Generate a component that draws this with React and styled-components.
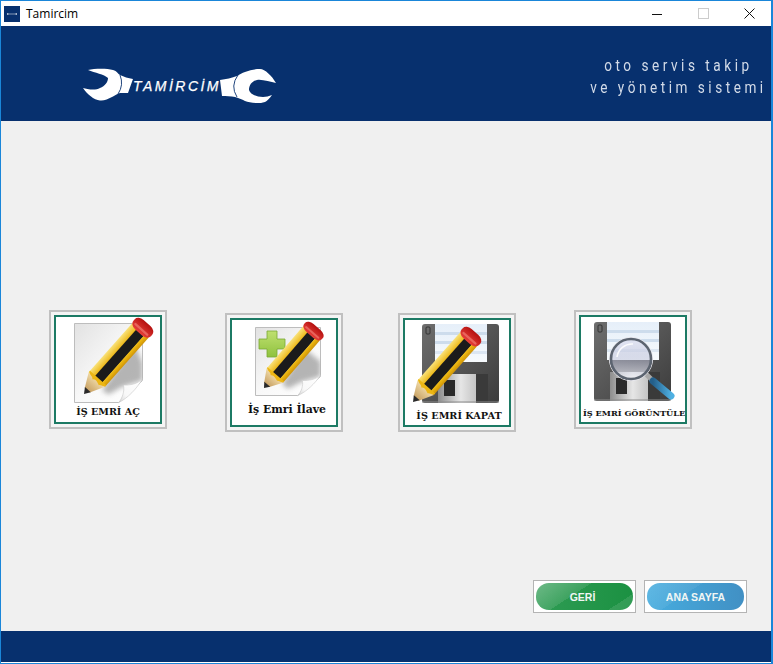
import React from "react";
import styled, { createGlobalStyle } from "styled-components";

const GlobalStyle = createGlobalStyle`
  html, body {
    margin: 0;
    padding: 0;
    background: #f0f0f0;
  }
`;

// shared gradients for all the tile icons
const IconDefs = () => (
  <HiddenSvg width="0" height="0">
    <defs>
      <linearGradient id="sheet" x1="0" y1="0" x2="1" y2="1">
        <stop offset="0" stopColor="#e2e2e2" />
        <stop offset="0.5" stopColor="#f8f8f8" />
        <stop offset="1" stopColor="#ffffff" />
      </linearGradient>
      <linearGradient id="curl" x1="1" y1="0" x2="0" y2="1">
        <stop offset="0" stopColor="#ffffff" />
        <stop offset="0.7" stopColor="#f8f8f8" />
        <stop offset="1" stopColor="#d4d4d4" />
      </linearGradient>
      <linearGradient id="wood" x1="0" y1="0" x2="1" y2="0">
        <stop offset="0" stopColor="#c7a063" />
        <stop offset="1" stopColor="#efd9a6" />
      </linearGradient>
      <linearGradient id="yellowTop" x1="0" y1="0" x2="0" y2="1">
        <stop offset="0" stopColor="#f9e27a" />
        <stop offset="1" stopColor="#ecb614" />
      </linearGradient>
      <linearGradient id="yellowLow" x1="0" y1="0" x2="0" y2="1">
        <stop offset="0" stopColor="#f3bf12" />
        <stop offset="1" stopColor="#cf9408" />
      </linearGradient>
      <linearGradient id="eraser" x1="0" y1="0" x2="1" y2="0">
        <stop offset="0" stopColor="#e8403a" />
        <stop offset="1" stopColor="#b4100f" />
      </linearGradient>
      <linearGradient id="plus" x1="0" y1="0" x2="0" y2="1">
        <stop offset="0" stopColor="#bfe070" />
        <stop offset="1" stopColor="#8fc23e" />
      </linearGradient>
      <linearGradient id="disk" x1="0" y1="0" x2="1" y2="1">
        <stop offset="0" stopColor="#6e6e6e" />
        <stop offset="1" stopColor="#3c3c3c" />
      </linearGradient>
      <linearGradient id="paper" x1="0" y1="0" x2="0" y2="1">
        <stop offset="0" stopColor="#e6eff9" />
        <stop offset="1" stopColor="#f6fafd" />
      </linearGradient>
      <linearGradient id="shutter" x1="0" y1="0" x2="1" y2="0">
        <stop offset="0" stopColor="#8d8d8d" />
        <stop offset="0.6" stopColor="#e6e6e6" />
        <stop offset="1" stopColor="#c4c4c4" />
      </linearGradient>
      <linearGradient id="lens" x1="0" y1="0" x2="0" y2="1">
        <stop offset="0" stopColor="#e4e6f4" stopOpacity="0.9" />
        <stop offset="0.5" stopColor="#b9bdd6" stopOpacity="0.5" />
        <stop offset="1" stopColor="#f2f3f8" stopOpacity="0.78" />
      </linearGradient>
      <linearGradient id="handle" x1="0" y1="0" x2="1" y2="0">
        <stop offset="0" stopColor="#245f8a" />
        <stop offset="1" stopColor="#4fb0e2" />
      </linearGradient>
      <filter id="soft" x="-30%" y="-30%" width="160%" height="160%">
        <feGaussianBlur stdDeviation="2.6" />
      </filter>
    </defs>
  </HiddenSvg>
);

const Sheet = ({ x, y, w, h, tip, end }) => {
  const outline = `M0 0H${w}V${h * 0.72}L${w * 0.65} ${h}H0Z`;
  const clipId = `page-${x}`;
  return (
    <g transform={`translate(${x} ${y})`}>
      <clipPath id={clipId}>
        <path d={outline} />
      </clipPath>
      <path d={outline} fill="url(#sheet)" stroke="#bdbdbd" strokeWidth="1" />
      {/* pencil's shadow falls on the page only */}
      <g clipPath={`url(#${clipId})`}>
        <path
          d={`M${tip[0] - x + 18} ${tip[1] - y - 4}L${end[0] - x - 12} ${end[1] - y + 22}L${w} ${h * 0.5}L${w} ${h * 0.72}L${w * 0.7} ${h * 0.8}L${w * 0.5} ${h * 0.9}Z`}
          fill="#6e6e6e"
          opacity="0.5"
          filter="url(#soft)"
        />
      </g>
      {/* folded corner */}
      <path
        d={`M${w} ${h * 0.7}C${w * 0.92} ${h * 0.77} ${w * 0.82} ${h * 0.78} ${w * 0.72} ${h * 0.78}C${w * 0.74} ${h * 0.86} ${w * 0.7} ${h * 0.95} ${w * 0.65} ${h}C${w * 0.78} ${h * 0.95} ${w * 0.92} ${h * 0.82} ${w} ${h * 0.7}Z`}
        fill="url(#curl)"
        stroke="#c8c8c8"
        strokeWidth="0.6"
      />
    </g>
  );
};

const Pencil = ({ tip, end }) => {
  const dx = end[0] - tip[0];
  const dy = end[1] - tip[1];
  const len = Math.hypot(dx, dy);
  const angle = (Math.atan2(dy, dx) * 180) / Math.PI;
  return (
    <g transform={`translate(${tip[0]} ${tip[1]}) rotate(${angle}) scale(${len / 98} 1.3)`}>
      <path d="M5 -2.6L20 -8.4V8.4L5 2.6Z" fill="url(#wood)" />
      <path d="M0 0L6 -3V3Z" fill="#2a2a2a" />
      <rect x="20" y="-8.4" width="68" height="6" fill="url(#yellowTop)" />
      <rect x="20" y="-2.8" width="68" height="7.6" fill="#1b1b1b" />
      <rect x="20" y="4.6" width="68" height="3.8" fill="url(#yellowLow)" />
      <path d="M21 -8.4C18 -6 20 -4 17 -2.6C20 -1 18 2 17 4C19 5 18 7 21 8.4H22V-8.4Z" fill="#ecb614" />
      <rect x="85" y="-9" width="13" height="18" rx="5.5" fill="url(#eraser)" />
      <rect x="88" y="-7" width="2.4" height="14" rx="1" fill="#f07a70" opacity="0.7" />
    </g>
  );
};

const Disk = ({ x, y }) => (
  <g transform={`translate(${x} ${y})`}>
    <path d="M3 0H74Q77 0 77 3V76Q77 79 74 79H3Q0 79 0 76V3Q0 0 3 0Z" fill="url(#disk)" />
    <rect x="4" y="3" width="4" height="7" rx="1" fill="none" stroke="#2d2d2d" strokeWidth="0.9" />
    <rect x="13" y="0" width="52" height="38" fill="url(#paper)" />
    <rect x="13" y="8" width="52" height="3" fill="#cddcec" />
    <rect x="13" y="17" width="52" height="3" fill="#cddcec" />
    <rect x="13" y="27" width="52" height="3" fill="#dbe6f2" />
    <rect x="16" y="50" width="38" height="29" fill="url(#shutter)" />
    <rect x="22" y="56" width="11" height="16" fill="#2a2a2a" />
    <rect x="54" y="50" width="12" height="29" fill="#3a3a3a" />
    <rect x="0" y="77" width="77" height="2" fill="#8c8c8c" opacity="0.5" />
  </g>
);

const Magnifier = ({ cx, cy, r, end }) => (
  <g>
    <line x1={cx + r * 0.7} y1={cy + r * 0.7} x2={cx + r * 1.1} y2={cy + r * 1.1} stroke="#a8a8a8" strokeWidth="5" />
    <line x1={cx + r * 1.1} y1={cy + r * 1.1} x2={end[0]} y2={end[1]} stroke="url(#handle)" strokeWidth="7" strokeLinecap="round" />
    <circle cx={cx} cy={cy} r={r + 1.6} fill="none" stroke="#e8e8ee" strokeWidth="1" />
    <circle cx={cx} cy={cy} r={r} fill="url(#lens)" stroke="#5c6470" strokeWidth="2.6" />
    <path
      d={`M${cx - r * 0.7} ${cy - r * 0.1}A${r * 0.75} ${r * 0.75} 0 0 1 ${cx + r * 0.1} ${cy - r * 0.75}`}
      fill="none"
      stroke="#ffffff"
      strokeWidth="1.6"
      opacity="0.85"
    />
  </g>
);

const PlusMark = ({ cx, cy }) => (
  <path
    transform={`translate(${cx} ${cy})`}
    d="M-5 -13H5V-5H13V5H5V13H-5V5H-13V-5H-5Z"
    fill="url(#plus)"
    stroke="#7aa832"
    strokeWidth="0.8"
    strokeLinejoin="round"
  />
);

const tiles = [
  {
    label: "İŞ EMRİ AÇ",
    drop: 0,
    gap: 6,
    shift: 0,
    size: 9.6,
    art: (
      <>
        <Sheet x={18.5} y={6.5} w={68} h={79} tip={[28, 77]} end={[91, 6]} />
        <Pencil tip={[28, 77]} end={[91, 6]} />
      </>
    ),
  },
  {
    label: "İş Emri İlave",
    drop: 3,
    gap: 1,
    shift: 6,
    size: 10.9,
    art: (
      <>
        <Sheet x={23.5} y={7.5} w={65} h={68} tip={[32, 68]} end={[85, 7]} />
        <PlusMark cx={40} cy={24} />
        <Pencil tip={[32, 68]} end={[85, 7]} />
      </>
    ),
  },
  {
    label: "İŞ EMRİ KAPAT",
    drop: 3,
    gap: 7,
    shift: 4,
    size: 9.7,
    art: (
      <>
        <Disk x={17} y={4} />
        <Pencil tip={[8, 82]} end={[70, 12]} />
      </>
    ),
  },
  {
    label: "İŞ EMRİ GÖRÜNTÜLE",
    drop: 0,
    gap: 7,
    shift: 2,
    size: 8.2,
    art: (
      <>
        <Disk x={13} y={5} />
        <Magnifier cx={50} cy={42} r={20} end={[90, 79]} />
      </>
    ),
  },
];

const WrenchLogo = () => (
  <LogoSvg viewBox="0 0 200 40" width="200" height="40">
    {/* left wrench, origin is x=80 y=66 of the page */}
    <path
      d="M8 4C14 2.6 26 2 33 4C37 5 38 8 40 9C44 11 48 12 53 13L48 27C45 27 42 27 40 27C36 28 35 30 32 31C28 33 24 35 20 34.5C14 34 7 28 3 22C7 23 15 25 20 22C25 20 28 16 28 12C24 8 15 7 8 4Z"
      fill="#fff"
    />
    <path d="M40 9Q44 19 38 28" fill="none" stroke="#07306e" strokeWidth="0.9" />
    {/* right wrench */}
    <path
      d="M140 14C146 13 152 12 157 10C160 8 162 7 165 6C170 4 175 3 180 3C185 3 192 10 196 17C190 16 182 13 177 14C172 15 169 19 169 24C170 28 176 31 183 31C186 31 189 30 192 29C190 32 187 35 185 36C182 37 180 37 177 37C172 37 168 36 165 35C162 33 158 32 155 31C151 30 146 30 142 30Z"
      fill="#fff"
    />
    <path d="M158 9Q150 20 157 31" fill="none" stroke="#07306e" strokeWidth="0.9" />
    <LogoText x="53" y="24.5" textLength="87">TAMİRCİM</LogoText>
  </LogoSvg>
);

const App = () => (
  <>
    <GlobalStyle />
    <IconDefs />
    <Window>
      <TitleBar>
        <AppIcon>
          <svg viewBox="0 0 16 16" width="16" height="16">
            <rect width="16" height="16" fill="#07306e" />
            <path d="M3 7.2L5 7.8H11L13 7.2V8.8L11 8.2H5L3 8.8Z" fill="#fff" />
          </svg>
        </AppIcon>
        <TitleText>Tamircim</TitleText>
        <Controls>
          <ControlSlot>
            <svg width="10" height="10" viewBox="0 0 10 10">
              <rect x="0" y="5" width="10" height="1" fill="#111" />
            </svg>
          </ControlSlot>
          <ControlSlot>
            <svg width="11" height="11" viewBox="0 0 11 11">
              <rect x="0.5" y="0.5" width="10" height="10" fill="none" stroke="#ccc" />
            </svg>
          </ControlSlot>
          <ControlSlot>
            <svg width="11" height="11" viewBox="0 0 11 11">
              <path d="M0.5 0.5L10.5 10.5M10.5 0.5L0.5 10.5" stroke="#111" fill="none" />
            </svg>
          </ControlSlot>
        </Controls>
      </TitleBar>

      <Header>
        <WrenchLogo />
        <Slogan>
          <span>oto servis takip</span>
          <span>ve yönetim sistemi</span>
        </Slogan>
      </Header>

      <Body>
        <TileRow>
          {tiles.map((t) => (
            <Tile key={t.label} $drop={t.drop}>
              <TileInner>
                <TileArt viewBox="0 0 104 82" width="104" height="82">
                  {t.art}
                </TileArt>
                <TileLabel $gap={t.gap} $shift={t.shift} $size={t.size}>{t.label}</TileLabel>
              </TileInner>
            </Tile>
          ))}
        </TileRow>
        <ButtonRow>
          <PillFrame>
            <Pill $tone="green">GERİ</Pill>
          </PillFrame>
          <PillFrame>
            <Pill $tone="blue">ANA SAYFA</Pill>
          </PillFrame>
        </ButtonRow>
      </Body>

      <Footer />
    </Window>
  </>
);

const HiddenSvg = styled.svg`
  display: block;
  height: 0;
  width: 0;
`;

const Window = styled.div`
  box-sizing: border-box;
  width: 773px;
  height: 664px;
  display: flex;
  flex-direction: column;
  background: #f0f0f0;
  border: 1px solid #1a86d9;
  border-right-width: 2px;
  font-family: "Liberation Sans", Arial, sans-serif;
`;

const TitleBar = styled.div`
  flex: 0 0 25px;
  display: flex;
  align-items: center;
  background: #fff;
  padding-left: 3px;
`;

const AppIcon = styled.div`
  display: flex;
  width: 16px;
  height: 16px;
  margin-top: 1px;
`;

const TitleText = styled.span`
  margin-left: 6px;
  font-family: "Open Sans", "Noto Sans", sans-serif;
  font-size: 12px;
  color: #000;
`;

const Controls = styled.div`
  margin-left: auto;
  margin-right: -1px;
  display: flex;
`;

const ControlSlot = styled.div`
  width: 46px;
  height: 25px;
  display: flex;
  align-items: center;
  justify-content: center;
`;

const Header = styled.header`
  flex: 0 0 95px;
  display: flex;
  align-items: flex-start;
  justify-content: space-between;
  background: #07306e;
`;

const LogoSvg = styled.svg`
  display: block;
  margin: 40px 0 0 79px;
`;

const LogoText = styled.text`
  font-family: "Liberation Sans", Arial, sans-serif;
  font-size: 14px;
  font-style: italic;
  fill: #fff;
  stroke: #fff;
  stroke-width: 0.25px;
  letter-spacing: 1.5px;
`;

// the slogan's font is tall and narrow, so it is squeezed sideways
const Slogan = styled.div`
  display: flex;
  flex-direction: column;
  align-items: center;
  margin: 28px 4px 0 0;
  font-family: Roboto, "Noto Sans", sans-serif;
  font-size: 17px;
  line-height: 22px;
  letter-spacing: 4.4px;
  color: #d3dbe8;
  transform: scaleX(0.8);
  transform-origin: right center;
`;

const Body = styled.main`
  flex: 1;
  display: flex;
  flex-direction: column;
  padding: 189px 24px 18px 48px;
`;

const TileRow = styled.div`
  display: grid;
  grid-template-columns: 176px 173px 176px 118px;
  align-items: start;
`;

const Tile = styled.div`
  box-sizing: border-box;
  width: 118px;
  height: 119px;
  margin-top: ${(p) => p.$drop}px;
  padding: 3px;
  background: #f4f4f4;
  border: 2px solid #c0c0c0;
`;

const TileInner = styled.div`
  box-sizing: border-box;
  height: 100%;
  background: #fff;
  border: 2px solid #1c7a64;
  overflow: hidden;
`;

const TileArt = styled.svg`
  display: block;
  overflow: visible;
`;

const TileLabel = styled.div`
  margin-top: ${(p) => p.$gap}px;
  padding-left: ${(p) => p.$shift}px;
  text-align: center;
  white-space: nowrap;
  font-family: "DejaVu Serif", "Liberation Serif", serif;
  font-weight: 700;
  font-size: ${(p) => p.$size}px;
  line-height: 14px;
  color: #111;
`;

const ButtonRow = styled.div`
  margin-top: auto;
  display: flex;
  justify-content: flex-end;
  gap: 8px;
`;

const PillFrame = styled.div`
  box-sizing: border-box;
  width: 103px;
  height: 33px;
  padding: 2px;
  background: #fff;
  border: 1px solid #b4b4b4;
`;

const tones = {
  green: `
    padding-right: 4px;
    background:
      linear-gradient(147deg, rgba(255, 255, 255, 0.3) 0, rgba(255, 255, 255, 0.1) 40%, rgba(255, 255, 255, 0) 40% 82%, rgba(255, 255, 255, 0.1) 82%),
      linear-gradient(90deg, #2f9c54, #1b9142);
  `,
  blue: `
    background:
      linear-gradient(147deg, rgba(255, 255, 255, 0.14) 0, rgba(255, 255, 255, 0.06) 40%, rgba(255, 255, 255, 0) 40%),
      linear-gradient(90deg, #47addf, #4190c4);
  `,
};

const Pill = styled.div`
  box-sizing: border-box;
  height: 100%;
  display: flex;
  align-items: center;
  justify-content: center;
  border-radius: 13px;
  ${(p) => tones[p.$tone]}
  color: #f1f6f4;
  font-size: 10.5px;
  font-weight: 700;
`;

const Footer = styled.footer`
  flex: 0 0 31px;
  background: #07306e;
  border-bottom: 1px solid #fff;
`;

export default App;
